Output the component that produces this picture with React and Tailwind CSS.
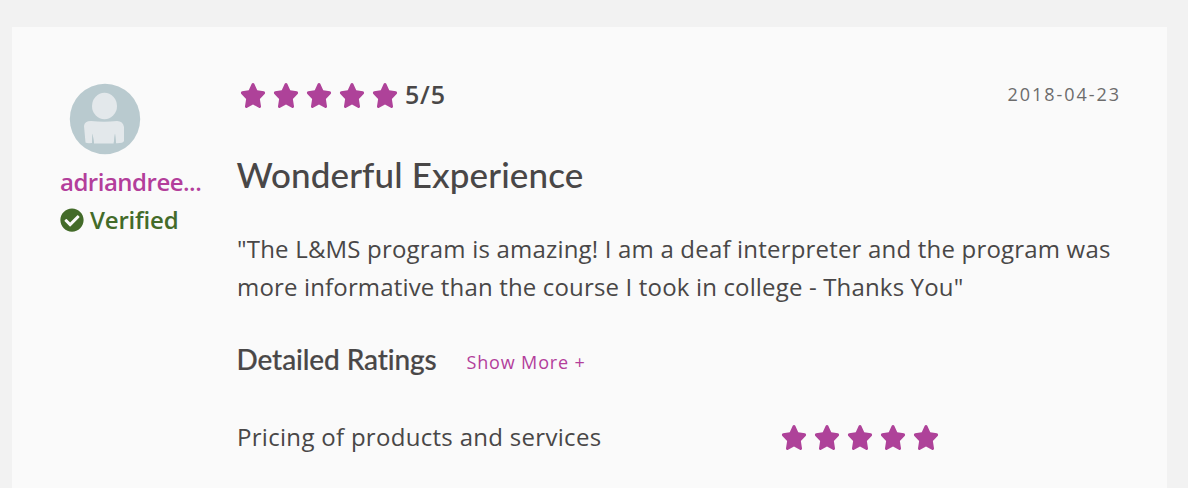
import { FaStar, FaCheckCircle } from "react-icons/fa";

function Stars() {
  return (
    <div className="flex gap-[7px] text-[#ae4299]">
      {[1, 2, 3, 4, 5].map((n) => (
        <FaStar key={n} preserveAspectRatio="none" className="h-[25px] w-[26px]" />
      ))}
    </div>
  );
}

function Avatar() {
  return (
    <svg viewBox="0 0 72 72" className="ml-[9px] block h-[72px] w-[72px]">
      <circle cx="36" cy="36" r="35.200" fill="#b9cacf" />
      <g fill="#e3e8eb">
        <ellipse cx="35.500" cy="23" rx="12.500" ry="13.200" />
        <path d="M22 38Q35 39.500 48 38Q54 38 55 44V58Q54 60.500 47 60.200L46 50.500L44.700 60.500H25L23.500 50.500L23 60Q18 60.500 16.500 59.500L15 43Q15.500 38 22 38Z" />
        <path d="M23.500 50.500L23 60H25ZM46 50.500L44.700 60.500H47Z" fill="#b9cacf" />
      </g>
    </svg>
  );
}

export default function App() {
  return (
    <div className="h-[488px] overflow-hidden bg-[#f2f2f2] pt-[27px] pr-[21px] pl-3 font-['Open_Sans',sans-serif] text-[#494747]">
      <article className="flex h-[461px] bg-[#fafafa] pr-12 pl-12">
        <aside className="w-[177px] shrink-0 pt-14 text-2xl font-semibold">
          <Avatar />
          <div className="mt-2 h-[38px] leading-[38px] whitespace-nowrap text-[#b33e9b]">
            <span className="tracking-[-0.5px]">adriandree...</span>
          </div>
          <div className="flex h-[38px] items-center gap-1.5 text-[#436b29]">
            <FaCheckCircle className="h-6 w-6" />
            <span className="tracking-[-0.2px]">Verified</span>
          </div>
        </aside>
        <section className="min-w-0 flex-1">
          <header className="mt-12 flex h-10 items-center justify-between pl-[3px]">
            <div className="flex items-center gap-[7px]">
              <Stars />
              <span className="text-[25px] font-semibold tracking-[0.8px]">5/5</span>
            </div>
            <time className="mr-[-2px] -mt-0.5 text-[18px] tracking-[1.95px] text-[#6d6c6c]">2018-04-23</time>
          </header>
          <h2 className="mt-[35px] ml-[-0.5px] h-12 font-['Lato',sans-serif] text-[35px] leading-[48px] font-medium tracking-[0.12px] [font-variant-ligatures:none]">Wonderful Experience</h2>
          <p className="mt-8 text-2xl leading-[38px] whitespace-nowrap">
            <span className="block tracking-[0.19px]">"The L&amp;MS program is amazing! I am a deaf interpreter and the program was</span>
            <span className="block tracking-[0.16px]">more informative than the course I took in college - Thanks You"</span>
          </p>
          <div className="mt-[33px] ml-[-0.5px] flex h-10 items-baseline leading-10">
            <h3 className="w-[230px] font-['Lato',sans-serif] text-[28px] font-medium tracking-[-0.1px] [font-variant-ligatures:none] [-webkit-text-stroke:0.2px_currentColor]">Detailed Ratings</h3>
            <button className="relative -top-px text-[18px] tracking-[0.85px] text-[#b33e9b]">Show More +</button>
          </div>
          <div className="mt-[38px] flex h-10 items-center">
            <span className="w-[544px] text-2xl tracking-[0.3px]">Pricing of products and services</span>
            <Stars />
          </div>
        </section>
      </article>
    </div>
  );
}
